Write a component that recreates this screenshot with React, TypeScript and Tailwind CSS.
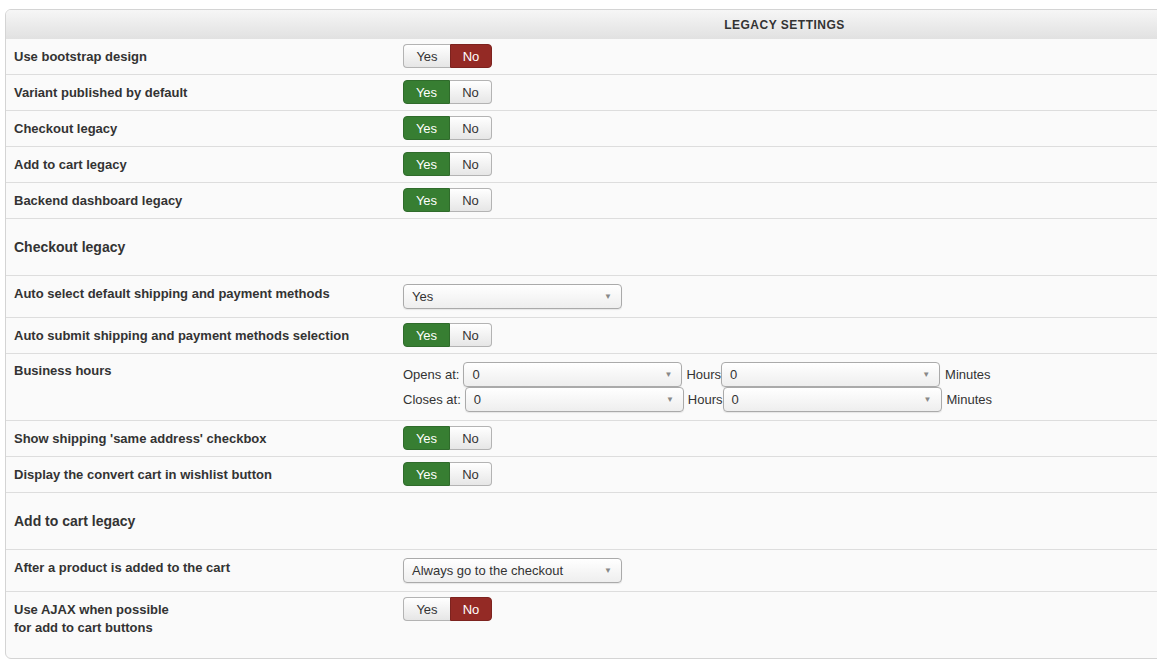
import React from "react";

type Row =
  | { kind: "toggle"; label: string[]; value: boolean }
  | { kind: "select"; label: string; value: string }
  | { kind: "section"; label: string }
  | { kind: "hours"; label: string };

const rows: Row[] = [
  { kind: "toggle", label: ["Use bootstrap design"], value: false },
  { kind: "toggle", label: ["Variant published by default"], value: true },
  { kind: "toggle", label: ["Checkout legacy"], value: true },
  { kind: "toggle", label: ["Add to cart legacy"], value: true },
  { kind: "toggle", label: ["Backend dashboard legacy"], value: true },
  { kind: "section", label: "Checkout legacy" },
  { kind: "select", label: "Auto select default shipping and payment methods", value: "Yes" },
  { kind: "toggle", label: ["Auto submit shipping and payment methods selection"], value: true },
  { kind: "hours", label: "Business hours" },
  { kind: "toggle", label: ["Show shipping 'same address' checkbox"], value: true },
  { kind: "toggle", label: ["Display the convert cart in wishlist button"], value: true },
  { kind: "section", label: "Add to cart legacy" },
  { kind: "select", label: "After a product is added to the cart", value: "Always go to the checkout" },
  { kind: "toggle", label: ["Use AJAX when possible", "for add to cart buttons"], value: false },
];

function Toggle({ on }: { on: boolean }) {
  const idle =
    "bg-gradient-to-b from-white to-[#e6e6e6] text-[#333] border border-[#b3b3b3]";
  return (
    <div className="flex h-[24px] text-[13px] leading-none">
      <div
        className={
          "flex w-[47px] items-center justify-center rounded-l-[4px] " +
          (on ? "bg-[#377e32] text-white border border-[#2f6b2b]" : idle + " border-r-0")
        }
      >
        Yes
      </div>
      <div
        className={
          "flex w-[42px] items-center justify-center rounded-r-[4px] " +
          (on ? idle + " border-l-0" : "bg-[#942a25] text-white border border-[#7d231f]")
        }
      >
        No
      </div>
    </div>
  );
}

function Select({ value, width = "w-[219px]" }: { value: string; width?: string }) {
  return (
    <div
      className={
        width +
        " inline-flex h-[25px] items-center justify-between rounded-[4px] border border-[#aaa] bg-gradient-to-b from-white to-[#eeeeee] pl-[8px] pr-[9px] align-middle text-[13px] text-[#333] shadow-[0_1px_1px_rgba(0,0,0,0.08)]"
      }
    >
      <span>{value}</span>
      <span className="text-[8px] text-[#888]">▼</span>
    </div>
  );
}

export default function App() {
  return (
    <div
      className="h-[660px] w-[1157px] overflow-hidden bg-white pl-[5px] pt-[9px] text-[#333]"
      style={{ fontFamily: '"Liberation Sans", Arial, sans-serif' }}
    >
      <div className="w-[1559px] overflow-hidden rounded-[6px] border border-[#d4d4d4] bg-[#fafafa]">
        <div className="flex h-[29px] items-center justify-center bg-gradient-to-b from-[#f6f6f6] to-[#e1e1e1] text-[12px] font-bold tracking-[0.5px] text-[#333]">
          LEGACY SETTINGS
        </div>

        {rows.map((row, i) => {
          const last = i === rows.length - 1;
          const border = last ? "" : " border-b border-[#dddddd]";

          if (row.kind === "section") {
            return (
              <div key={i} className={"flex h-[57px] items-center pl-[8px] text-[14px] font-bold" + border}>
                {row.label}
              </div>
            );
          }

          if (row.kind === "select") {
            return (
              <div key={i} className={"flex h-[42px]" + border}>
                <div className="w-[389px] pl-[8px] pt-[9px] text-[13px] font-bold leading-[18px]">
                  {row.label}
                </div>
                <div className="pl-[8px] pt-[8px]">
                  <Select value={row.value} />
                </div>
              </div>
            );
          }

          if (row.kind === "hours") {
            return (
              <div key={i} className={"flex h-[67px]" + border}>
                <div className="w-[389px] pl-[8px] pt-[8px] text-[13px] font-bold leading-[18px]">
                  {row.label}
                </div>
                <div className="pl-[8px] pt-[8px] text-[13px] leading-[25px]">
                  <div className="flex items-center">
                    <span className="mr-[4px]">Opens at:</span>
                    <Select value="0" />
                    <span className="ml-[4px]">Hours</span>
                    <Select value="0" />
                    <span className="ml-[5px]">Minutes</span>
                  </div>
                  <div className="flex items-center">
                    <span className="mr-[4px]">Closes at:</span>
                    <Select value="0" />
                    <span className="ml-[4px]">Hours</span>
                    <Select value="0" />
                    <span className="ml-[5px]">Minutes</span>
                  </div>
                </div>
              </div>
            );
          }

          return (
            <div key={i} className={"flex " + (last ? "h-[66px]" : "h-[36px]") + border}>
              <div className="w-[389px] pl-[8px] pt-[9px] text-[13px] font-bold leading-[18px]">
                {row.label.map((l) => (
                  <div key={l}>{l}</div>
                ))}
              </div>
              <div className="pl-[8px] pt-[5px]">
                <Toggle on={row.value} />
              </div>
            </div>
          );
        })}
      </div>
    </div>
  );
}
